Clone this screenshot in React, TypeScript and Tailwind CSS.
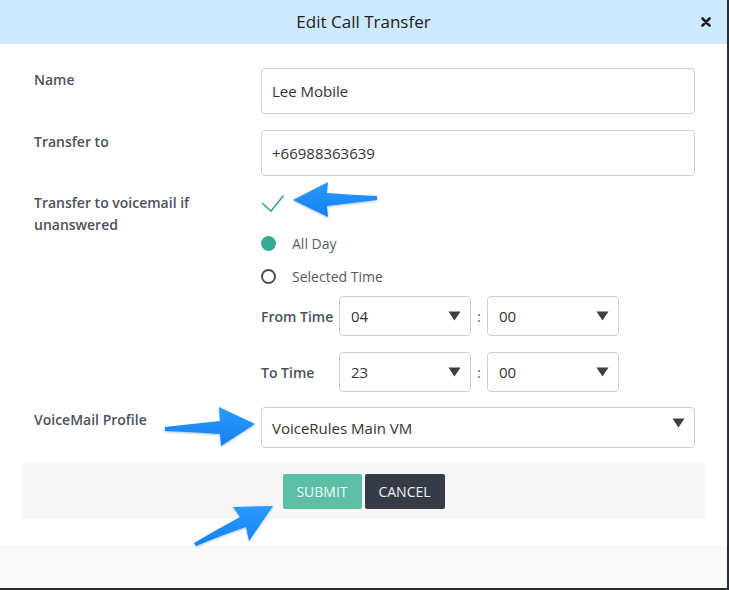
import React from 'react';

const font = { fontFamily: '"Open Sans", "Noto Sans", sans-serif' };

const Caret = () => (
  <svg width="13" height="10" viewBox="0 0 13 10" aria-hidden="true">
    <path d="M0.5 0.5 H12.5 L6.5 9.5 Z" fill="#3a3f47" />
  </svg>
);

const Select = ({ value, className }: { value: string; className: string }) => (
  <div
    className={`flex shrink-0 items-center justify-between rounded-[4px] border border-[#cfcfcf] bg-white pl-[11px] pr-[9px] text-[15px] text-[#333] ${className}`}
  >
    <span>{value}</span>
    <Caret />
  </div>
);

const Radio = ({ checked, label }: { checked: boolean; label: string }) => (
  <div className="flex h-[33px] items-center">
    {checked ? (
      <span className="h-[15px] w-[15px] rounded-full bg-[#36a996]" />
    ) : (
      <span className="h-[15px] w-[15px] rounded-full border-2 border-[#4a4f57] bg-white" />
    )}
    <span className="ml-[16px] text-[14px] text-[#555b66]">{label}</span>
  </div>
);

const TimeRow = ({ label, hour, minute }: { label: string; hour: string; minute: string }) => (
  <div className="flex h-[40px] items-center">
    <span className="w-[78px] shrink-0 text-[14px] font-semibold text-[#4b515d]">{label}</span>
    <Select value={hour} className="h-[40px] w-[132px]" />
    <span className="w-[16px] shrink-0 text-center text-[14px] text-[#555]">:</span>
    <Select value={minute} className="h-[40px] w-[132px]" />
  </div>
);

const App = () => {
  return (
    <div className="h-[590px] w-[729px] bg-[#2a2e33]" style={font}>
      <div className="relative flex h-[588px] w-[727px] flex-col bg-white">
        <div className="relative flex h-[44px] items-center justify-center bg-[#cde9fd]">
          <h1 className="text-[17px] font-medium text-[#222]">Edit Call Transfer</h1>
          <svg className="absolute right-[16px] top-[17px]" width="10" height="10" viewBox="0 0 10 10" aria-hidden="true">
            <path d="M1.5 1.5 L8.5 8.5 M8.5 1.5 L1.5 8.5" stroke="#1e1e1e" strokeWidth="2.6" strokeLinecap="round" />
          </svg>
        </div>

        <div className="flex flex-col px-[22px] pt-[24px]">
          <div className="flex flex-col pl-[12px] pr-[10px]">
            <div className="flex">
              <label className="w-[227px] shrink-0 pt-[1px] text-[14px] leading-[22px] font-semibold text-[#4b515d]">Name</label>
              <div className="flex h-[46px] w-[434px] shrink-0 items-center rounded-[4px] border border-[#cfcfcf] px-[10px] text-[15px] text-[#333]">
                Lee Mobile
              </div>
            </div>

            <div className="mt-[16px] flex">
              <label className="w-[227px] shrink-0 pt-[1px] text-[14px] leading-[22px] font-semibold text-[#4b515d]">Transfer to</label>
              <div className="flex h-[46px] w-[434px] shrink-0 items-center rounded-[4px] border border-[#cfcfcf] px-[10px] text-[15px] text-[#333]">
                +66988363639
              </div>
            </div>

            <div className="mt-[16px] flex">
              <label className="mr-[47px] w-[180px] shrink-0 text-[14px] leading-[22px] font-semibold text-[#4b515d]">
                Transfer to voicemail if unanswered
              </label>
              <div className="flex w-[434px] shrink-0 flex-col">
                <div className="h-[35px] pt-[2px]">
                  <svg width="24" height="19" viewBox="0 0 24 19" aria-hidden="true">
                    <path d="M1 9 L10 17 L22.5 1.5" fill="none" stroke="#3aa897" strokeWidth="1.6" />
                  </svg>
                </div>
                <Radio checked label="All Day" />
                <Radio checked={false} label="Selected Time" />
                <div className="mt-[3px]">
                  <TimeRow label="From Time" hour="04" minute="00" />
                </div>
                <div className="mt-[16px]">
                  <TimeRow label="To Time" hour="23" minute="00" />
                </div>
              </div>
            </div>

            <div className="mt-[15px] flex">
              <label className="w-[227px] shrink-0 pt-[2px] text-[14px] leading-[22px] font-semibold text-[#4b515d]">VoiceMail Profile</label>
              <div className="flex h-[41px] w-[434px] shrink-0 justify-between rounded-[4px] border border-[#cfcfcf] pl-[10px] pr-[9px] text-[15px] text-[#333]">
                <span className="self-center pt-[2px]">VoiceRules Main VM</span>
                <span className="pt-[10px]">
                  <Caret />
                </span>
              </div>
            </div>
          </div>

          <div className="mt-[15px] flex h-[56px] items-center justify-center gap-[3px] bg-[#f7f7f7]">
            <button className="h-[35px] w-[79px] rounded-[2px] bg-[#5cbfa6] text-[14px] text-[#eefaf6]">SUBMIT</button>
            <button className="h-[35px] w-[80px] rounded-[2px] bg-[#363c47] text-[14px] text-[#f0f0f0]">CANCEL</button>
          </div>
        </div>

        <div className="mt-auto h-[43px] bg-[#f9f9f9]" />

        <svg className="pointer-events-none absolute inset-0" width="727" height="588" aria-hidden="true">
          <defs>
            <filter id="glow" x="-20%" y="-20%" width="140%" height="140%">
              <feDropShadow dx="0" dy="1" stdDeviation="1.2" floodColor="#0b4f99" floodOpacity="0.35" />
            </filter>
            <linearGradient id="arrowFill" x1="0" y1="0" x2="0" y2="1">
              <stop offset="0" stopColor="#2a9bff" />
              <stop offset="1" stopColor="#1580f0" />
            </linearGradient>
          </defs>
          <g fill="url(#arrowFill)" filter="url(#glow)">
            <path d="M293 200 L328 182 L327 193 Q352 195 377 196 L377 200 Q352 203 327 206 L328 217 Z" />
            <path d="M255 424 L219 407 L220 421 Q192 424 165 427 L165 431 Q192 432 220 434 L221 446 Z" />
            <path d="M273 506 L233 507 L240 517 Q216 530 194 543 L196 546 Q222 535 246 527 L249 541 Z" />
          </g>
        </svg>
      </div>
    </div>
  );
};

export default App;
